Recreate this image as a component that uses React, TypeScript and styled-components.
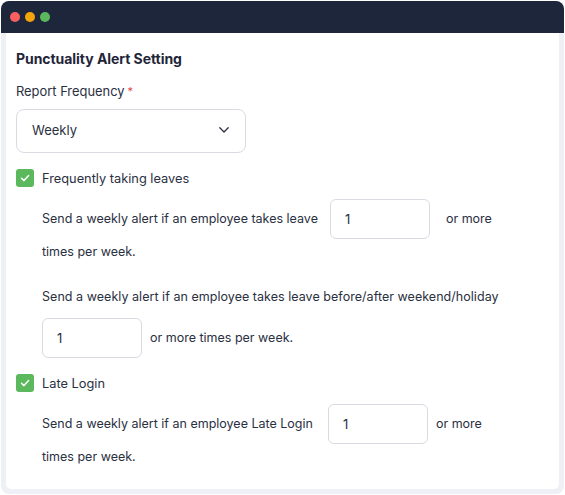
import React from "react";
import styled, { createGlobalStyle } from "styled-components";

const Global = createGlobalStyle`
  html, body { margin: 0; padding: 0; background: #ffffff; }
  body { font-family: "Inter", "Noto Sans", sans-serif; color: #2a3042; }
  * { box-sizing: border-box; }
`;
const Page = styled.div`
  width: 565px; height: 495px; padding: 1px; background: #fff;
`;
const Frame = styled.div`
  height: 493px; display: flex; flex-direction: column; background: #eef0f5;
  border-radius: 8px; overflow: hidden;
`;
const TitleBar = styled.div`
  height: 32px; flex: none; background: #1e263c; display: flex; align-items: center;
  gap: 5px; padding: 0 0 0 9px;
`;
const Dot = styled.span<{ $c: string }>`
  width: 10px; height: 10px; border-radius: 50%; background: ${(p) => p.$c};
`;
const Panel = styled.div`
  flex: none; height: 456px; margin: 0 5px; background: #fff; border-radius: 0 0 5px 5px;
  padding: 17px 10px 0 10px; display: flex; flex-direction: column; align-items: flex-start;
`;
const Title = styled.h1`
  margin: 0; font-size: 14px; line-height: 18px; font-weight: 700; color: #1f2639; letter-spacing: -0.05px;
`;
const Label = styled.div`
  margin-top: 14px; font-size: 12.9px; line-height: 18px; color: #2a3042;
`;
const Req = styled.span`
  color: #e5484d; margin-left: 3px; font-size: 11px; vertical-align: 1px;
`;
const Select = styled.div`
  margin-top: 8px; width: 230px; height: 44px; border: 1px solid #d9dbe3; border-radius: 8px;
  display: flex; align-items: center; justify-content: space-between; padding: 0 16px 2px 15px;
  font-size: 13px; color: #2a3042;
`;
const CheckRow = styled.div<{ $top: number }>`
  margin-top: ${(p) => p.$top}px; height: 18px; display: flex; align-items: center; gap: 8px;
  font-size: 12.8px; color: #2a3042;
`;
const Box = styled.span`
  width: 18px; height: 18px; border-radius: 3px; background: #5cb85c; display: flex;
  align-items: center; justify-content: center;
`;
const Alert = styled.div<{ $top: number }>`
  margin-top: ${(p) => p.$top}px; margin-left: 26px; width: 490px; font-size: 12.5px; color: #2a3042;
`;
const Line = styled.div<{ $gap?: number; $top?: number; $spread?: boolean }>`
  display: flex; align-items: center; gap: ${(p) => p.$gap ?? 0}px; min-height: 18px;
  margin-top: ${(p) => p.$top ?? 0}px; white-space: nowrap;
  letter-spacing: ${(p) => (p.$spread ? "0.04px" : "normal")};
`;
const Num = styled.div<{ $l?: number; $r?: number }>`
  width: 100px; height: 40px; border: 1px solid #d9dbe3; border-radius: 6px; display: flex;
  align-items: center; padding-left: 14px; font-size: 13px; color: #2a3042; flex: none;
  margin-left: ${(p) => p.$l ?? 0}px; margin-right: ${(p) => p.$r ?? 0}px; margin-bottom: -2px;
`;

const Check = () => (
  <svg width="10" height="10" viewBox="0 0 10 10" fill="none">
    <path d="M1.5 5.3 4 7.6 8.6 2.6" stroke="#fff" strokeWidth="1.5" strokeLinecap="round" strokeLinejoin="round" />
  </svg>
);
const Chevron = () => (
  <svg width="10" height="10" viewBox="0 0 10 10" fill="none">
    <path d="M0.8 2.8 5 7 9.2 2.8" stroke="#2a3042" strokeWidth="1.3" strokeLinecap="round" strokeLinejoin="round" />
  </svg>
);

export default function App() {
  return (
    <Page>
      <Global />
      <Frame>
        <TitleBar>
          <Dot $c="#f8605f" />
          <Dot $c="#f5a50c" />
          <Dot $c="#5cb85c" />
        </TitleBar>
        <Panel>
          <Title>Punctuality Alert Setting</Title>
          <Label>Report Frequency<Req>*</Req></Label>
          <Select>Weekly<Chevron /></Select>
          <CheckRow $top={16}><Box><Check /></Box>Frequently taking leaves</CheckRow>
          <Alert $top={12}>
            <Line>Send a weekly alert if an employee takes leave<Num $l={12} $r={16}>1</Num>or more</Line>
            <Line $top={5}>times per week.</Line>
            <Line $spread $top={27}>Send a weekly alert if an employee takes leave before/after weekend/holiday</Line>
            <Line $top={13} $gap={8}><Num>1</Num>or more times per week.</Line>
          </Alert>
          <CheckRow $top={18}><Box><Check /></Box>Late Login</CheckRow>
          <Alert $top={12}>
            <Line>Send a weekly alert if an employee Late Login<Num $l={15} $r={8}>1</Num>or more</Line>
            <Line $top={5}>times per week.</Line>
          </Alert>
        </Panel>
      </Frame>
    </Page>
  );
}
